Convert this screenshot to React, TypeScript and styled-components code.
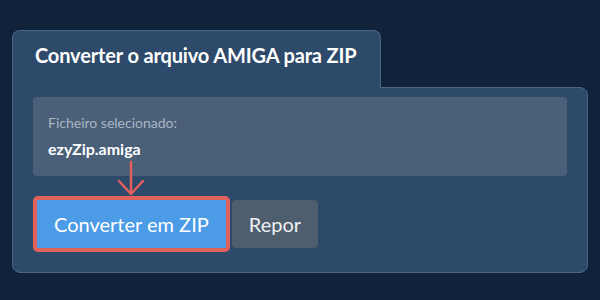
import React from "react";
import styled, { createGlobalStyle } from "styled-components";

const Global = createGlobalStyle`
  html, body { margin: 0; padding: 0; }
  body {
    width: 600px;
    height: 300px;
    background: #10233a;
    font-family: Lato, "Noto Sans", sans-serif;
    overflow: hidden;
  }
`;

const Page = styled.div`
  padding: 30px 12px 0 12px;
  width: 576px;
`;

const Tab = styled.div`
  position: relative;
  z-index: 1;
  display: inline-block;
  background: #2d4a6a;
  border: 1px solid #4a6585;
  border-bottom: none;
  border-radius: 8px 8px 0 0;
  padding: 12px 23px 21px 22px;
  margin-bottom: -1px;
`;

const Title = styled.h2`
  margin: 0;
  font-size: 20px;
  line-height: 24px;
  font-weight: 700;
  color: #ffffff;
  letter-spacing: -0.15px;
`;

const Body = styled.div`
  background: #2d4a6a;
  border: 1px solid #4a6585;
  border-radius: 0 8px 8px 8px;
  padding: 9px 20px 20px 20px;
`;

const InfoBox = styled.div`
  background: #4a6079;
  border-radius: 4px;
  padding: 16px 15px 17px 15px;
  display: flex;
  flex-direction: column;
  gap: 6px;
`;

const Label = styled.div`
  font-size: 14px;
  line-height: 20px;
  color: #aab5c2;
`;

const FileName = styled.div`
  font-size: 16px;
  line-height: 20px;
  font-weight: 700;
  color: #ffffff;
`;

const ButtonRow = styled.div`
  display: flex;
  align-items: center;
  gap: 2px;
  margin-top: 20px;
`;

const Highlight = styled.div`
  position: relative;
  border: 4px solid #e0615b;
  border-radius: 5px;
  display: flex;
`;

const Arrow = styled.svg`
  position: absolute;
  left: 50%;
  top: -40px;
  transform: translateX(-50%);
  overflow: visible;
`;

const Button = styled.button<{ $variant: "primary" | "secondary" }>`
  height: 48px;
  padding: 0 17px;
  border: none;
  border-radius: ${(p) => (p.$variant === "primary" ? "1px" : "4px")};
  background: ${(p) => (p.$variant === "primary" ? "#4c9be7" : "#4f5e6e")};
  color: ${(p) => (p.$variant === "primary" ? "#ffffff" : "#eef0f2")};
  font-family: Lato, "Noto Sans", sans-serif;
  font-size: 20px;
  line-height: 24px;
  font-weight: 400;
  cursor: pointer;
`;

export default function App() {
  return (
    <>
      <Global />
      <Page>
        <Tab>
          <Title>Converter o arquivo AMIGA para ZIP</Title>
        </Tab>
        <Body>
          <InfoBox>
            <Label>Ficheiro selecionado:</Label>
            <FileName>ezyZip.amiga</FileName>
          </InfoBox>
          <ButtonRow>
            <Highlight>
              <Arrow width="28" height="36" viewBox="0 0 28 36">
                <path
                  d="M14 2 L14 34 M2 21 L14 34 L26 21"
                  fill="none"
                  stroke="#e0615b"
                  strokeWidth="2.5"
                  strokeLinecap="round"
                  strokeLinejoin="round"
                />
              </Arrow>
              <Button $variant="primary">Converter em ZIP</Button>
            </Highlight>
            <Button $variant="secondary">Repor</Button>
          </ButtonRow>
        </Body>
      </Page>
    </>
  );
}
